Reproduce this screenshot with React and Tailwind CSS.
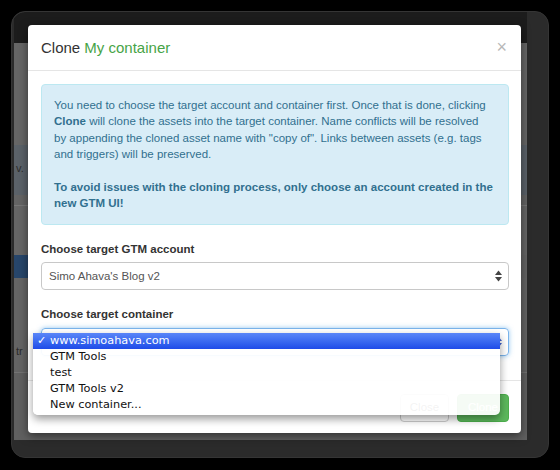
import React from "react";

function Arrows({ color = "#333" }) {
  return (
    <svg width="7" height="12" viewBox="0 0 7 12">
      <polygon points="0,5 3.5,0.5 7,5" fill={color} />
      <polygon points="0,7 3.5,11.5 7,7" fill={color} />
    </svg>
  );
}

export default function App() {
  return (
    <div className="w-[560px] h-[470px] bg-black p-[11px] font-['Liberation_Sans',Arial,sans-serif]">
      <div className="w-[538px] h-[447px] rounded-[14px] bg-[#2b2b2b] border border-[#353535] pl-[2px] pt-0 pr-[21px] pb-[17px] overflow-hidden">
        {/* dimmed page behind the modal */}
        <div className="relative w-[513px] h-[428px] bg-[#636363] flex flex-col overflow-visible">
          <div className="h-[31px] bg-[#1c1c1c]" />
          <div className="h-[102px] bg-[#666]" />
          <div className="h-[50px] bg-[#5b6269] flex items-center pl-[2px] pb-[4px] text-[11px] text-[#2c2c2c]">
            v.
          </div>
          <div className="h-[10px] bg-[#646464]" />
          <div className="h-px bg-[#777]" />
          <div className="h-[49px] bg-[#666]" />
          <div className="h-[23px] flex">
            <div className="w-[120px] bg-[#27466b]" />
            <div className="flex-1 bg-[#646464]" />
          </div>
          <div className="h-[52px] bg-[#656565]" />
          <div className="h-[42px] bg-[#646464] flex items-center pl-[2px] text-[11px] text-[#2a2a2a]">
            tr
          </div>
          <div className="h-px bg-[#737373]" />
          <div className="flex-1 bg-[#606060]" />

          {/* modal */}
          <div className="absolute left-[14px] top-[13px] w-[493px] bg-white rounded-[4px] shadow-[0_3px_10px_rgba(0,0,0,0.5)]">
            <div className="h-[46px] border-b border-[#e5e5e5] flex items-center justify-between pl-[13px] pr-[14px] pt-[1px]">
              <div className="text-[15px] text-[#333]">
                Clone <span className="text-[#47a447]">My container</span>
              </div>
              <div className="text-[18px] text-[#b8b8b8] leading-none mb-[3px]">×</div>
            </div>

            <div className="pt-[13px] pl-[13px] pr-[12px] pb-[24px]">
              <div className="rounded-[4px] bg-[#d9edf7] border border-[#bce8f1] px-[12px] py-[12px] text-[11.5px] leading-[16.4px] text-[#31708f] whitespace-nowrap">
                You need to choose the target account and container first. Once that is done, clicking
                <br />
                <b>Clone</b> will clone the assets into the target container. Name conflicts will be resolved
                <br />
                by appending the cloned asset name with "copy of". Links between assets (e.g. tags
                <br />
                and triggers) will be preserved.
                <br />
                <br />
                <b>To avoid issues with the cloning process, only choose an account created in the</b>
                <br />
                <b>new GTM UI!</b>
              </div>

              <div className="mt-[16px] mb-[5px] text-[11.5px] leading-[16.4px] font-bold text-[#333]">
                Choose target GTM account
              </div>
              <div className="h-[28px] rounded-[4px] border border-[#c8c8c8] flex items-center justify-between pl-[7px] pr-[6px] text-[11.5px] text-[#555]">
                <span>Simo Ahava's Blog v2</span>
                <Arrows color="#444" />
              </div>

              <div className="mt-[16px] mb-[5px] text-[11.5px] leading-[16.4px] font-bold text-[#333]">
                Choose target container
              </div>
              <div className="h-[28px] rounded-[4px] border border-[#7ab3ea] shadow-[0_0_5px_rgba(102,175,233,0.7)] flex items-center justify-end pl-[7px] pr-[6px]">
                <Arrows color="#3b5fd0" />
              </div>
            </div>

            <div className="border-t border-[#e5e5e5] pt-[13px] pb-[11px] px-[12px] flex justify-end gap-[8px]">
              <div className="w-[49px] h-[28px] rounded-[4px] border border-[#ccc] bg-white text-[#333] text-[11.5px] flex items-center justify-center">
                Close
              </div>
              <div className="w-[52px] h-[28px] rounded-[4px] border border-[#4cae4c] bg-[#5cb85c] text-white text-[11.5px] flex items-center justify-center">
                Clone
              </div>
            </div>

            {/* native popup menu */}
            <div className="absolute left-[5px] top-[308px] w-[467px] pb-[2px] bg-[rgba(255,255,255,0.94)] rounded-b-[5px] shadow-[0_4px_9px_rgba(0,0,0,0.4)] font-['DejaVu_Sans',sans-serif] text-[11.3px] text-[#111]">
              <div className="h-[16px] flex items-center bg-gradient-to-b from-[#5a86f8] to-[#1f4ae8] text-white">
                <span className="w-[17px] pl-[4px]">✓</span>
                <span>www.simoahava.com</span>
              </div>
              <div className="h-[16px] flex items-center pl-[17px]">GTM Tools</div>
              <div className="h-[16px] flex items-center pl-[17px]">test</div>
              <div className="h-[16px] flex items-center pl-[17px]">GTM Tools v2</div>
              <div className="h-[16px] flex items-center pl-[17px]">New container...</div>
            </div>
          </div>
        </div>
      </div>
    </div>
  );
}
